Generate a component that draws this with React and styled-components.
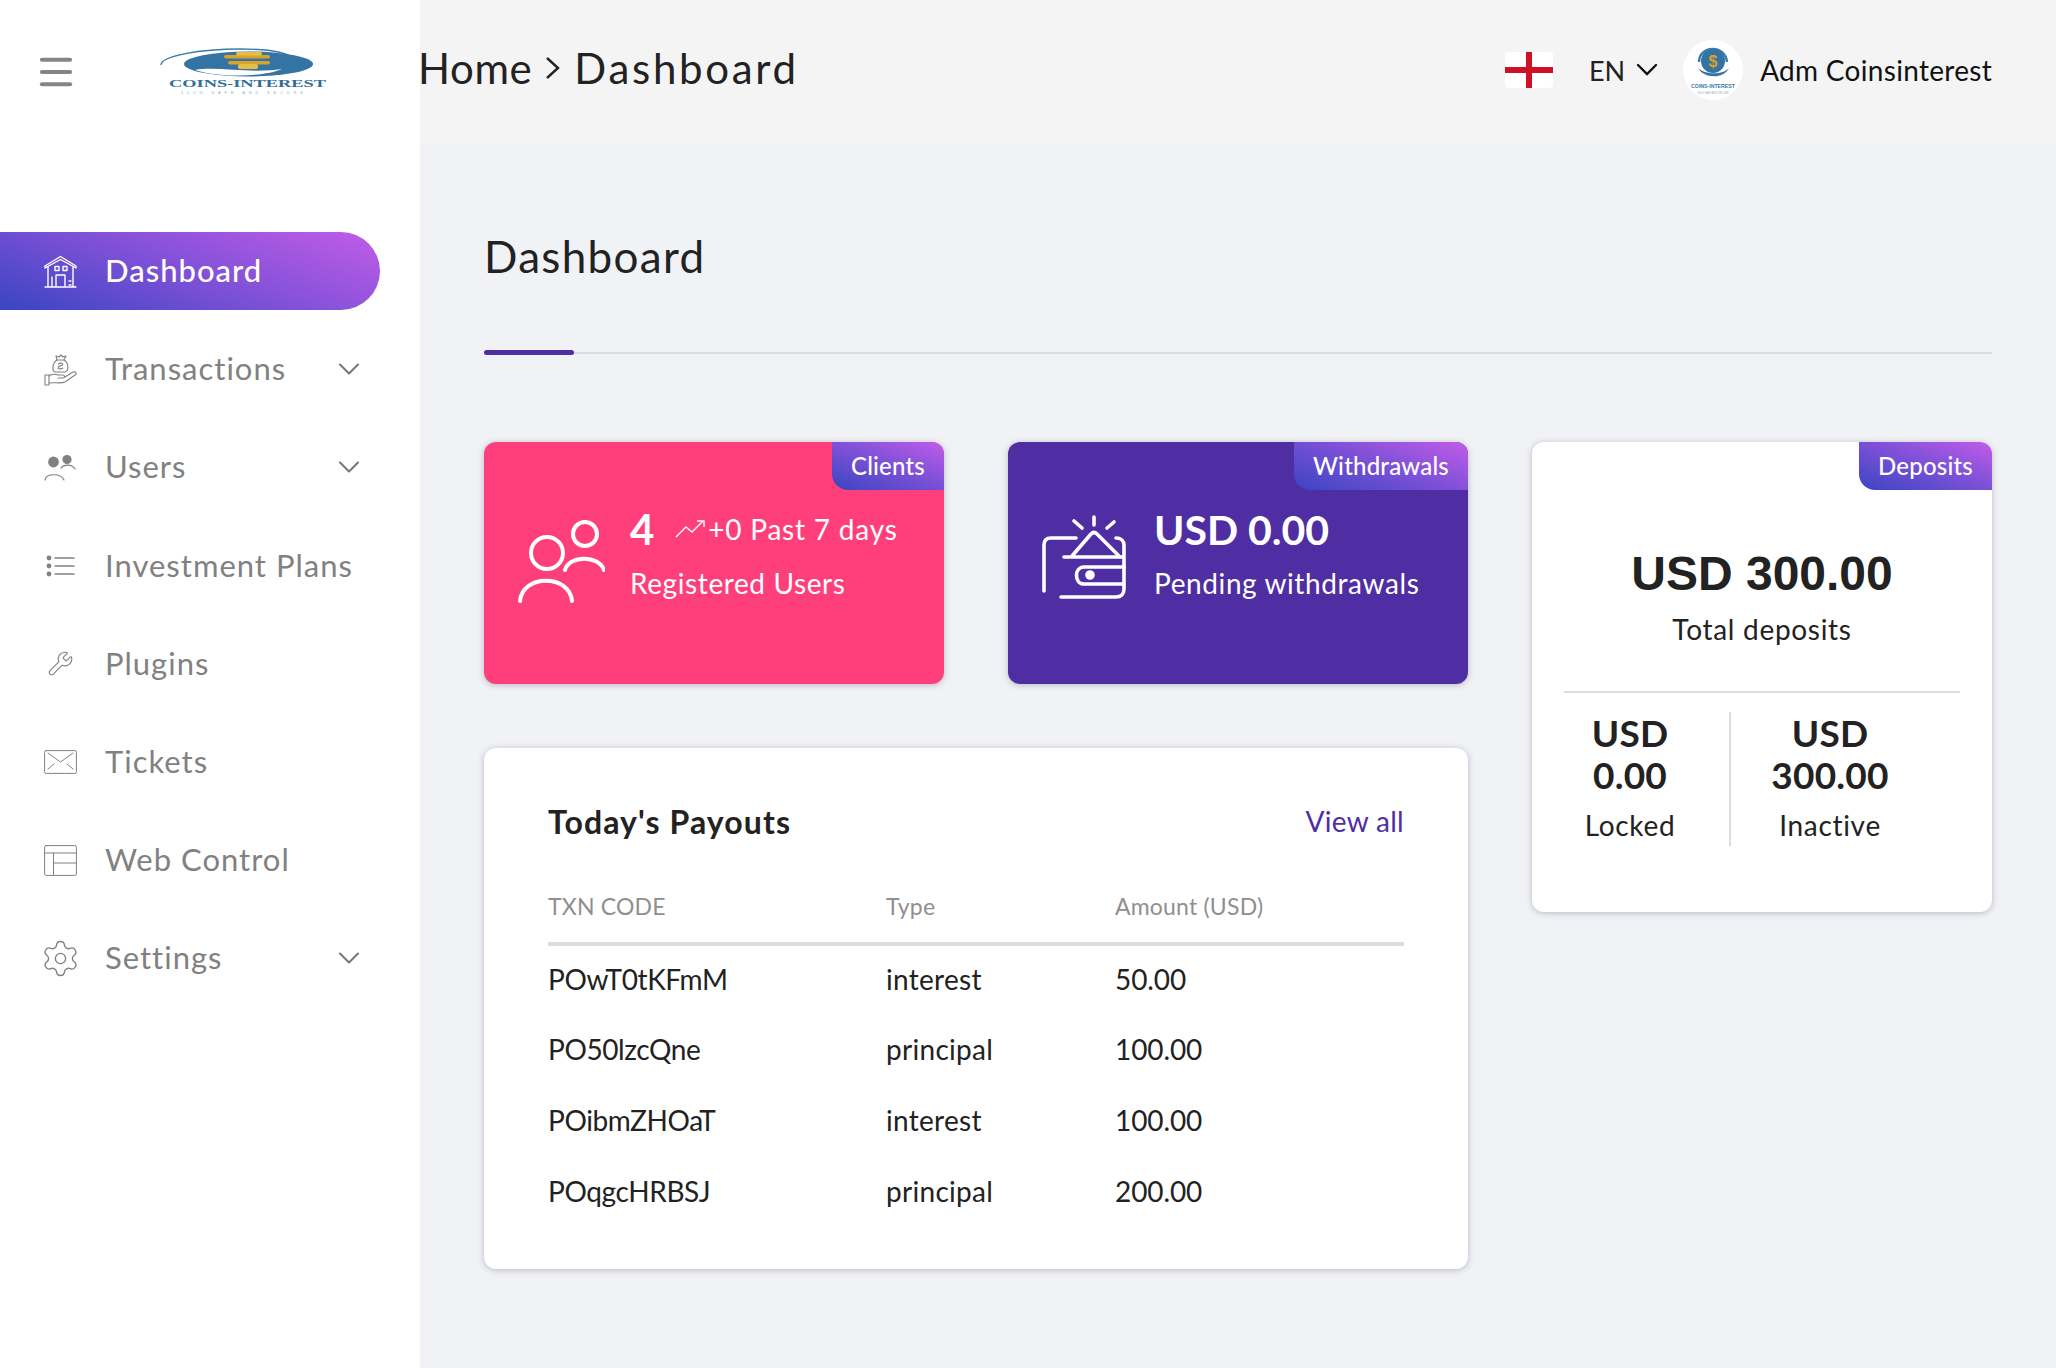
import React from "react";
import styled, { createGlobalStyle } from "styled-components";
import { ChevronDown, Menu, Settings, Wrench } from "lucide-react";

const GlobalStyle = createGlobalStyle`
  html, body { margin: 0; padding: 0; background: #f0f2f6; }
  * { box-sizing: border-box; }
  body { font-family: "Lato", "Open Sans", sans-serif; color: #222; }
`;

const Shell = styled.div`
  display: flex;
  min-height: 1368px;
`;

const Sidebar = styled.aside`
  width: 420px;
  flex: none;
  background: #fff;
`;

const Brand = styled.div`
  height: 144px;
  display: flex;
  align-items: center;
  padding-left: 35px;
  gap: 83px;
  color: #858585;
  margin-bottom: 88px;
`;

const Nav = styled.nav`
  display: flex;
  flex-direction: column;
  gap: 20.2px;
  padding-right: 40px;
`;

const NavItem = styled.a`
  height: 78px;
  display: flex;
  align-items: center;
  padding: 0 13px 2px 44px;
  gap: 28px;
  font-size: 31px;
  letter-spacing: 1px;
  font-weight: ${(p) => (p.$active ? 500 : 400)};
  color: ${(p) => (p.$active ? "#fff" : "#818181")};
  border-radius: 0 39px 39px 0;
  background: ${(p) =>
    p.$active ? "linear-gradient(20deg, #3a45c2 0%, #7a50d6 45%, #c25ce8 100%)" : "none"};
`;

const NavIcon = styled.span`
  width: 33px;
  height: 33px;
  display: flex;
  align-items: center;
  justify-content: center;
  flex: none;
  margin-top: 2px;
  svg { flex: none; }
`;

const NavCaret = styled(ChevronDown)`
  margin: 2px 0 0 auto;
  color: #777;
`;

const Main = styled.main`
  flex: 1;
  min-width: 0;
`;

const TopBar = styled.header`
  height: 144px;
  background: #f4f4f4;
  display: flex;
  align-items: center;
  padding-right: 64px;
`;

const Crumbs = styled.div`
  display: flex;
  align-items: center;
  gap: 12px;
  margin: -8px 0 0 -2px;
  font-size: 42px;
  color: #222;
`;

const Crumb = styled.span`
  letter-spacing: ${(p) => p.$ls}px;
`;

const TopRight = styled.div`
  margin: -4px 0 0 auto;
  display: flex;
  align-items: center;
`;

const Flag = styled.svg`
  width: 48px;
  height: 36px;
  border-radius: 4px;
  display: block;
`;

const Lang = styled.div`
  display: flex;
  align-items: center;
  gap: 11px;
  margin-left: 36px;
  font-size: 27px;
`;

const Avatar = styled.div`
  width: 60px;
  height: 60px;
  border-radius: 50%;
  background: #fff;
  margin-left: 25px;
  display: flex;
  align-items: center;
  justify-content: center;
`;

const UserName = styled.div`
  margin-left: 17px;
  font-size: 28px;
  letter-spacing: 0.3px;
  color: #111;
`;

const Content = styled.div`
  padding: 64px 64px 0;
`;

const PageTitle = styled.h1`
  margin: 0;
  height: 98px;
  font-size: 44px;
  line-height: 96px;
  font-weight: 400;
  letter-spacing: 1.3px;
  color: #222;
`;

const TitleRule = styled.div`
  position: relative;
  height: 2px;
  margin-top: 46px;
  background: #dcdde1;
  &::before {
    content: "";
    position: absolute;
    left: 0;
    top: -2px;
    width: 90px;
    height: 5px;
    border-radius: 3px;
    background: #4f2ea3;
  }
`;

const Board = styled.div`
  display: grid;
  grid-template-columns: 460px 460px 460px;
  gap: 64px;
  margin-top: 88px;
  align-items: start;
`;

const LeftArea = styled.div`
  grid-column: span 2;
  display: grid;
  grid-template-columns: 460px 460px;
  gap: 64px;
`;

const Card = styled.section`
  position: relative;
  border-radius: 12px;
  background: ${(p) => p.$bg || "#fff"};
  color: ${(p) => (p.$bg ? "#fff" : "#222")};
  box-shadow: 0 1px 6px rgba(40, 40, 60, 0.28);
  overflow: hidden;
`;

const StatCard = styled(Card)`
  height: 242px;
  display: flex;
  align-items: flex-start;
  padding: 65px 0 0 ${(p) => p.$pad}px;
  gap: ${(p) => p.$gap}px;
`;

const Tab = styled.div`
  position: absolute;
  top: 0;
  right: 0;
  height: 48px;
  padding: 0 19px 2px;
  display: flex;
  align-items: center;
  font-size: 24px;
  font-weight: 500;
  letter-spacing: 0.2px;
  color: #fff;
  border-bottom-left-radius: 16px;
  background: linear-gradient(20deg, #3a45c2 0%, #7a50d6 50%, #c25ce8 100%);
`;

const StatIcon = styled.svg`
  flex: none;
  margin-top: ${(p) => p.$top}px;
`;

const StatBody = styled.div`
  display: flex;
  flex-direction: column;
`;

const StatTop = styled.div`
  height: 44px;
  display: flex;
  align-items: center;
  font-size: 28px;
  letter-spacing: 0.8px;
`;

const BigNumber = styled.span`
  font-size: 42px;
  font-weight: 700;
  margin-right: 20px;
`;

const TrendIcon = styled.svg`
  margin-right: 3px;
`;

const StatHeading = styled.div`
  height: 44px;
  display: flex;
  align-items: center;
  font-size: 41px;
  font-weight: 700;
`;

const StatLabel = styled.div`
  margin-top: 10px;
  line-height: 44px;
  font-size: 28px;
  letter-spacing: 0.6px;
`;

const DepositCard = styled(Card)`
  height: 470px;
  padding: 103px 32px 0;
  text-align: center;
`;

const DepositTotal = styled.div`
  font-family: "Liberation Sans", Arial, sans-serif;
  font-size: 48px;
  line-height: 58px;
  font-weight: 700;
  color: #222;
`;

const DepositLabel = styled.div`
  margin-top: 4px;
  font-size: 28px;
  line-height: 44px;
  letter-spacing: 0.7px;
`;

const DepositRule = styled.hr`
  border: 0;
  height: 2px;
  background: #dcdcdc;
  margin: 40px 0 19px;
`;

const Split = styled.div`
  display: grid;
  grid-template-columns: 165px 231px;
`;

const SplitCol = styled.div`
  height: 134px;
  padding: ${(p) => (p.$right ? "0 31px 0 0" : "0 33px 0 0")};
  border-left: ${(p) => (p.$right ? "2px solid #dcdcdc" : "0")};
`;

const SplitValue = styled.div`
  font-size: 37px;
  line-height: 42px;
  font-weight: 700;
  letter-spacing: 0.2px;
`;

const SplitLabel = styled.div`
  margin-top: 7px;
  font-size: 28px;
  line-height: 44px;
  letter-spacing: 0.7px;
`;

const PayoutCard = styled(Card)`
  grid-column: span 2;
  height: 521px;
  padding: 50px 64px 0;
`;

const PayoutHead = styled.div`
  display: flex;
  align-items: center;
  justify-content: space-between;
  height: 46px;
`;

const PayoutTitle = styled.h2`
  margin: 0;
  font-size: 32px;
  font-weight: 700;
  letter-spacing: 1.1px;
`;

const ViewAll = styled.a`
  font-size: 28px;
  letter-spacing: 0.3px;
  color: #4f2ea3;
`;

const Table = styled.table`
  width: 100%;
  margin-top: 25px;
  border-collapse: collapse;
  table-layout: fixed;
`;

const Th = styled.th`
  width: ${(p) => p.$w};
  height: 75px;
  padding: 0;
  text-align: left;
  font-size: 23px;
  font-weight: 400;
  letter-spacing: 0.2px;
  color: #8f8f8f;
  border-bottom: 4px solid #dcdcdc;
`;

const Td = styled.td`
  height: 71px;
  padding: 0 0 4px;
  font-size: 28px;
  letter-spacing: ${(p) => p.$ls}px;
  color: #222;
`;

const ic = { fill: "none", stroke: "currentColor", strokeLinecap: "round", strokeLinejoin: "round" };

const HouseIcon = () => (
  <svg width="33" height="33" viewBox="0 0 33 33" {...ic} strokeWidth="1.4">
    <path d="M1 11 L16.5 1.5 L32 11 V13 L16.5 4.5 L1 13 Z" />
    <path d="M4 12 V31 M29 12 V31 M1 32 H32" />
    <rect x="11" y="11.5" width="4" height="4" />
    <rect x="19" y="11.5" width="4" height="4" />
    <path d="M12 31 V20 H21 V31 M8 22 V31 M25 26 H27 M25 30 H27" />
  </svg>
);

const MoneyIcon = () => (
  <svg width="33" height="33" viewBox="0 0 33 33" {...ic} strokeWidth="1.1">
    <path d="M13 7 C8 10 8 18 11 19 H21 C25 18 25 10 20 7 Z" />
    <path d="M13 7 L12 3 L15 4 L17 2 L19 4 L22 3 L20 7" />
    <path d="M14.5 11 C16 9.5 19 10 18.6 11.6 C18 13.4 14.6 12.4 14.2 14.6 C14 16 17 16.4 18.8 15" />
    <path d="M1 22 H5 V32 H1 Z" />
    <path d="M5 23 C8 20 11 21 14 22 H19 C21 22 21 25 19 25 H14 M21 24 L29 19 C32 18 33 21 31 22 L21 29 C17 31 10 29 5 30" />
  </svg>
);

const UsersIcon = () => (
  <svg width="33" height="27" viewBox="0 0 33 27" {...ic} strokeWidth="1.2">
    <circle cx="9.5" cy="8" r="5.4" fill="currentColor" stroke="none" />
    <circle cx="23" cy="5.5" r="4.6" fill="currentColor" stroke="none" />
    <path d="M1 26 C2 19 17 19 20 26" />
    <path d="M17 14 C20 10 28 10 31 15" />
  </svg>
);

const ListIcon = () => (
  <svg width="33" height="24" viewBox="0 0 33 24" {...ic} strokeWidth="1.4">
    <circle cx="5" cy="4" r="2.4" fill="currentColor" stroke="none" />
    <circle cx="5" cy="12" r="2.4" fill="currentColor" stroke="none" />
    <circle cx="5" cy="20" r="2.4" fill="currentColor" stroke="none" />
    <path d="M11 4 H30 M11 12 H30 M11 20 H30" />
  </svg>
);

const MailIcon = () => (
  <svg width="33" height="24" viewBox="0 0 33 24" {...ic} strokeWidth="1">
    <rect x="0.6" y="0.6" width="31.8" height="22.8" rx="1.6" />
    <path d="M4 3 L16.5 12 L29 3 M4 19 L10 14 M29 19 L23 14" />
  </svg>
);

const TableIcon = () => (
  <svg width="33" height="31" viewBox="0 0 33 31" {...ic} strokeWidth="1">
    <rect x="0.6" y="0.6" width="31.8" height="29.8" rx="1.6" />
    <path d="M0.6 8 H32.4 M9.5 8 V30.4 M9.5 18 H32.4" />
  </svg>
);

const LogoMark = () => (
  <svg width="170" height="52" viewBox="0 0 170 52">
    <path d="M1 19 C1 10 40 3 80 3 C115 3 132 8 134 14" fill="none" stroke="#3a7aa8" strokeWidth="1.4" />
    <ellipse cx="88.5" cy="18" rx="64.5" ry="12.5" fill="#3474a4" />
    <path d="M35 24 C58 20 90 28 122 23 C104 31 60 32 35 24 Z" fill="#fff" />
    <rect x="64" y="9" width="46" height="3.5" rx="1.7" fill="#d9a32a" />
    <rect x="76" y="6" width="26" height="3.5" rx="1.7" fill="#e8bd45" />
    <rect x="68" y="15" width="42" height="3.5" rx="1.7" fill="#d9a32a" />
    <rect x="78" y="18" width="20" height="5" rx="1.7" fill="#e8bd45" />
    <text x="9" y="41" textLength="157" lengthAdjust="spacingAndGlyphs" fontFamily="Liberation Serif, serif" fontWeight="700" fontSize="9.5" fill="#2f6d9c">COINS-INTEREST</text>
    <text x="21" y="48" textLength="122" fontFamily="Liberation Sans, sans-serif" fontSize="4" fill="#8fb3cc">100% SAFE AND SECURE</text>
  </svg>
);

const AvatarMark = () => (
  <svg width="44" height="56" viewBox="0 0 44 56">
    <path d="M8 20 C8 3 34 2 36 20" fill="none" stroke="#3a7aa8" strokeWidth="2.4" />
    <circle cx="22" cy="19" r="12" fill="#3474a4" />
    <path d="M7 26 C12 36 32 38 38 26 C32 33 14 33 7 26 Z" fill="#3474a4" />
    <text x="22" y="25" textAnchor="middle" fontFamily="Liberation Sans, sans-serif" fontWeight="700" fontSize="16" fill="#d9a32a">$</text>
    <text x="22" y="46" textAnchor="middle" fontFamily="Liberation Sans, sans-serif" fontWeight="700" fontSize="5.2" fill="#3a7aa8">COINS-INTEREST</text>
    <text x="22" y="52" textAnchor="middle" fontFamily="Liberation Sans, sans-serif" fontSize="2.6" fill="#8fb3cc">100% SAFE AND SECURE</text>
  </svg>
);

const menu = [
  { label: "Dashboard", icon: <HouseIcon />, active: true },
  { label: "Transactions", icon: <MoneyIcon />, caret: true },
  { label: "Users", icon: <UsersIcon />, caret: true },
  { label: "Investment Plans", icon: <ListIcon /> },
  { label: "Plugins", icon: <Wrench size={27} strokeWidth={1} /> },
  { label: "Tickets", icon: <MailIcon /> },
  { label: "Web Control", icon: <TableIcon /> },
  { label: "Settings", icon: <Settings size={41} strokeWidth={0.8} />, caret: true },
];

const payouts = [
  ["POwT0tKFmM", "interest", "50.00"],
  ["PO50lzcQne", "principal", "100.00"],
  ["POibmZHOaT", "interest", "100.00"],
  ["POqgcHRBSJ", "principal", "200.00"],
];

// letter spacing per table column, the codes run tighter than the rest
const cellSpacing = [-0.4, 0.3, -0.1];

export default function App() {
  return (
    <Shell>
      <GlobalStyle />
      <Sidebar>
        <Brand>
          <Menu size={42} strokeWidth={2.4} />
          <LogoMark />
        </Brand>
        <Nav>
          {menu.map((item) => (
            <NavItem key={item.label} $active={item.active}>
              <NavIcon>{item.icon}</NavIcon>
              {item.label}
              {item.caret && <NavCaret size={36} strokeWidth={1.4} />}
            </NavItem>
          ))}
        </Nav>
      </Sidebar>
      <Main>
        <TopBar>
          <Crumbs>
            <Crumb $ls={0.6}>Home</Crumb>
            <svg width="18" height="26" viewBox="0 0 18 26" fill="none" stroke="#222" strokeWidth="2.4">
              <path d="M3 3 L14 13 L3 23" />
            </svg>
            <Crumb $ls={2.7}>Dashboard</Crumb>
          </Crumbs>
          <TopRight>
            <Flag viewBox="0 0 48 36">
              <rect width="48" height="36" fill="#fff" />
              <rect x="21" width="6" height="36" fill="#ce1126" />
              <rect y="15" width="48" height="6" fill="#ce1126" />
            </Flag>
            <Lang>
              EN
              <svg width="22" height="14" viewBox="0 0 22 14" fill="none" stroke="#111" strokeWidth="2.4" strokeLinecap="round">
                <path d="M2 2 L11 11 L20 2" />
              </svg>
            </Lang>
            <Avatar>
              <AvatarMark />
            </Avatar>
            <UserName>Adm Coinsinterest</UserName>
          </TopRight>
        </TopBar>
        <Content>
          <PageTitle>Dashboard</PageTitle>
          <TitleRule />
          <Board>
            <LeftArea>
              <StatCard $bg="#ff3f7c" $pad={33} $gap={25}>
                <Tab>Clients</Tab>
                <StatIcon $top={13} width="88" height="84" viewBox="0 0 88 84" fill="none" stroke="#fff" strokeWidth="4" strokeLinecap="round">
                  <circle cx="30" cy="33" r="16" />
                  <path d="M3 81 C5 54 53 54 55 81" />
                  <circle cx="68" cy="14" r="12" />
                  <path d="M48 50 C52 35 82 35 87 50" />
                </StatIcon>
                <StatBody>
                  <StatTop>
                    <BigNumber>4</BigNumber>
                    <TrendIcon width="30" height="20" viewBox="0 0 30 20" fill="none" stroke="#fff" strokeWidth="1.4">
                      <path d="M1 18 L11 8 L17 13 L28 2 M22 2 H29 V8" />
                    </TrendIcon>
                    +0 Past 7 days
                  </StatTop>
                  <StatLabel>Registered Users</StatLabel>
                </StatBody>
              </StatCard>
              <StatCard $bg="#4f2ea3" $pad={34} $gap={26}>
                <Tab>Withdrawals</Tab>
                <StatIcon $top={8} width="86" height="84" viewBox="0 0 86 84" fill="none" stroke="#fff" strokeWidth="3.6" strokeLinecap="round" strokeLinejoin="round">
                  <path d="M2 76 V30 C2 25 5 23 9 23 H34" />
                  <path d="M22 42 H80 M30 41 L49 19 C51 17 53 17 55 19 L78 42" />
                  <path d="M74 23 C79 23 82 26 82 30 V74 C82 79 79 82 74 82 H19" />
                  <path d="M82 52 H42 C32 52 32 69 42 69 H82" />
                  <circle cx="48" cy="60" r="3" fill="#fff" />
                  <path d="M52 2 V10 M32 6 L40 13 M72 7 L65 13" />
                </StatIcon>
                <StatBody>
                  <StatHeading>USD 0.00</StatHeading>
                  <StatLabel>Pending withdrawals</StatLabel>
                </StatBody>
              </StatCard>
              <PayoutCard>
                <PayoutHead>
                  <PayoutTitle>Today's Payouts</PayoutTitle>
                  <ViewAll>View all</ViewAll>
                </PayoutHead>
                <Table>
                  <thead>
                    <tr>
                      <Th $w="338px">TXN CODE</Th>
                      <Th $w="229px">Type</Th>
                      <Th>Amount (USD)</Th>
                    </tr>
                  </thead>
                  <tbody>
                    {payouts.map((row) => (
                      <tr key={row[0]}>
                        {row.map((cell, i) => (
                          <Td key={cell} $ls={cellSpacing[i]}>{cell}</Td>
                        ))}
                      </tr>
                    ))}
                  </tbody>
                </Table>
              </PayoutCard>
            </LeftArea>
            <DepositCard>
              <Tab>Deposits</Tab>
              <DepositTotal>USD 300.00</DepositTotal>
              <DepositLabel>Total deposits</DepositLabel>
              <DepositRule />
              <Split>
                <SplitCol>
                  <SplitValue>USD 0.00</SplitValue>
                  <SplitLabel>Locked</SplitLabel>
                </SplitCol>
                <SplitCol $right>
                  <SplitValue>USD 300.00</SplitValue>
                  <SplitLabel>Inactive</SplitLabel>
                </SplitCol>
              </Split>
            </DepositCard>
          </Board>
        </Content>
      </Main>
    </Shell>
  );
}
